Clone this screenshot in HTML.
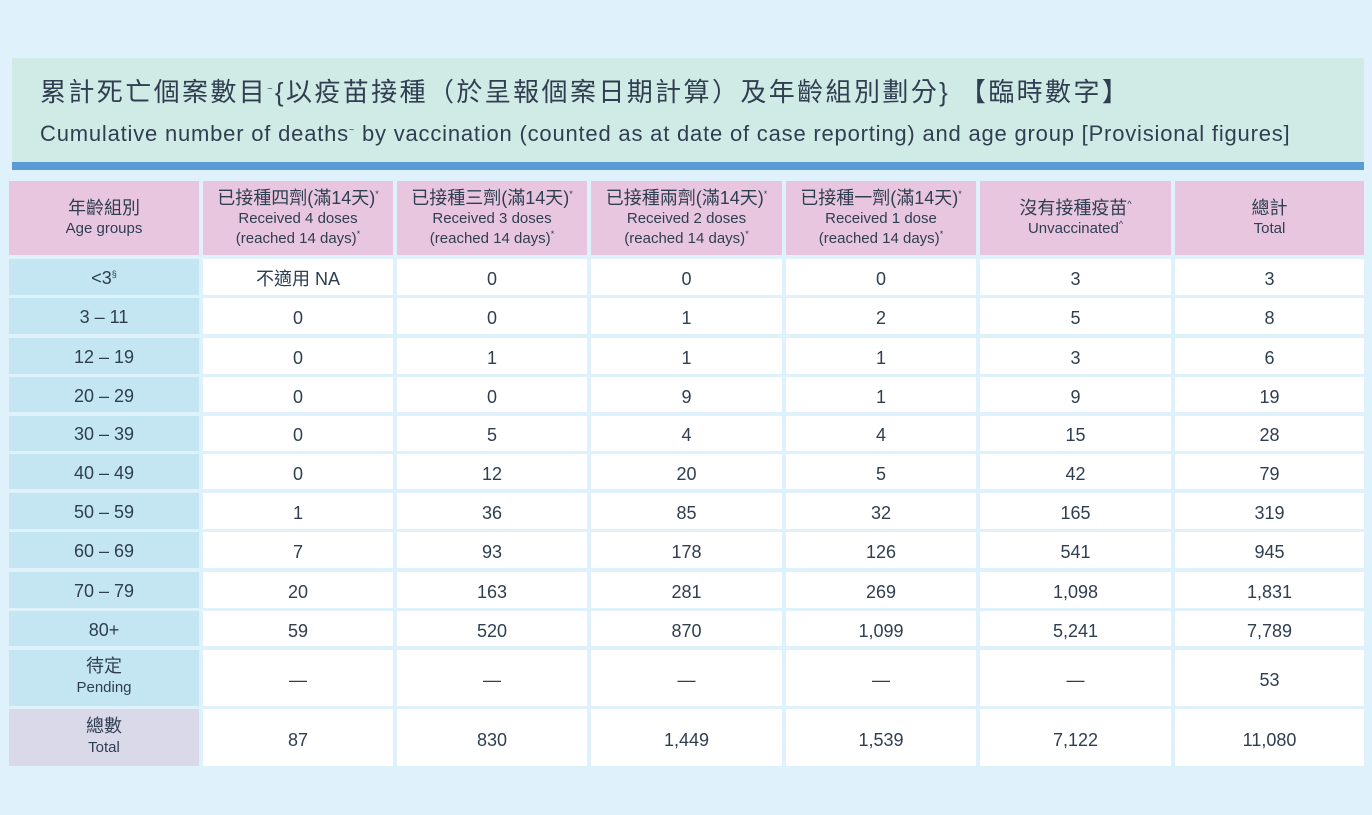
<!DOCTYPE html>
<html><head><meta charset="utf-8"><style>
body{margin:0;width:1372px;height:815px;background:#dff2fc;font-family:"Liberation Sans","Noto Sans CJK TC",sans-serif;color:#2f3e50;position:relative;overflow:hidden}
.tbox{position:absolute;left:12px;top:58px;width:1352px;height:104px;background:#d0ebe6}
.bar{position:absolute;left:12px;top:162px;width:1352px;height:8px;background:#5b9bd5}
.t1{position:absolute;left:40px;top:72px;font-size:26px;letter-spacing:2.4px;white-space:nowrap}
.t2{position:absolute;left:40px;top:121px;font-size:22px;letter-spacing:0.8px;white-space:nowrap}
.g{position:absolute;left:9px;top:181px;display:grid;grid-template-columns:190px 190px 190px 191px 190px 191px 189px;column-gap:4px;row-gap:3.5px;grid-template-rows:74px 36px 36px 36px 35px 35px 35px 36px 36px 36px 35px 56px 57px}
.g>div{background:#fff;display:flex;flex-direction:column;align-items:center;justify-content:center;text-align:center;font-size:18px;line-height:1.1;padding-top:6px;box-sizing:border-box}
.g>.h{background:#e8c6e0;font-size:18px;line-height:1.25;padding-top:0}
.g .h small{font-size:15px;line-height:1.35;display:block}
.g>.a{background:#c3e6f2;padding-top:4px}
.g>.m{padding-top:2px}
.g .a small{font-size:15px;line-height:1.6;display:block}
.g>.tt{background:#d9d9ea}
sup{font-size:9px;vertical-align:super;line-height:0}
</style></head><body>
<div class="tbox"></div><div class="bar"></div>
<div class="t1">累計死亡個案數目<sup>~</sup>{以疫苗接種（於呈報個案日期計算）及年齡組別劃分} 【臨時數字】</div>
<div class="t2">Cumulative number of deaths<sup>~</sup> by vaccination (counted as at date of case reporting) and age group [Provisional figures]</div>
<div class="g">
<div class="h"><span>年齡組別</span><small>Age groups</small></div>
<div class="h"><span>已接種四劑(滿14天)<sup>*</sup></span><small>Received 4 doses<br>(reached 14 days)<sup>*</sup></small></div>
<div class="h"><span>已接種三劑(滿14天)<sup>*</sup></span><small>Received 3 doses<br>(reached 14 days)<sup>*</sup></small></div>
<div class="h"><span>已接種兩劑(滿14天)<sup>*</sup></span><small>Received 2 doses<br>(reached 14 days)<sup>*</sup></small></div>
<div class="h"><span>已接種一劑(滿14天)<sup>*</sup></span><small>Received 1 dose<br>(reached 14 days)<sup>*</sup></small></div>
<div class="h"><span>沒有接種疫苗<sup>^</sup></span><small>Unvaccinated<sup>^</sup></small></div>
<div class="h"><span>總計</span><small>Total</small></div>
<div class="a"><span>&lt;3<sup>§</sup></span></div><div>不適用 NA</div><div>0</div><div>0</div><div>0</div><div>3</div><div>3</div>
<div class="a">3 – 11</div><div>0</div><div>0</div><div>1</div><div>2</div><div>5</div><div>8</div>
<div class="a">12 – 19</div><div>0</div><div>1</div><div>1</div><div>1</div><div>3</div><div>6</div>
<div class="a">20 – 29</div><div>0</div><div>0</div><div>9</div><div>1</div><div>9</div><div>19</div>
<div class="a">30 – 39</div><div>0</div><div>5</div><div>4</div><div>4</div><div>15</div><div>28</div>
<div class="a">40 – 49</div><div>0</div><div>12</div><div>20</div><div>5</div><div>42</div><div>79</div>
<div class="a">50 – 59</div><div>1</div><div>36</div><div>85</div><div>32</div><div>165</div><div>319</div>
<div class="a">60 – 69</div><div>7</div><div>93</div><div>178</div><div>126</div><div>541</div><div>945</div>
<div class="a">70 – 79</div><div>20</div><div>163</div><div>281</div><div>269</div><div>1,098</div><div>1,831</div>
<div class="a">80+</div><div>59</div><div>520</div><div>870</div><div>1,099</div><div>5,241</div><div>7,789</div>
<div class="a m"><span>待定</span><small>Pending</small></div><div>—</div><div>—</div><div>—</div><div>—</div><div>—</div><div>53</div>
<div class="a m tt"><span>總數</span><small>Total</small></div><div>87</div><div>830</div><div>1,449</div><div>1,539</div><div>7,122</div><div>11,080</div>
</div>
</body></html>
